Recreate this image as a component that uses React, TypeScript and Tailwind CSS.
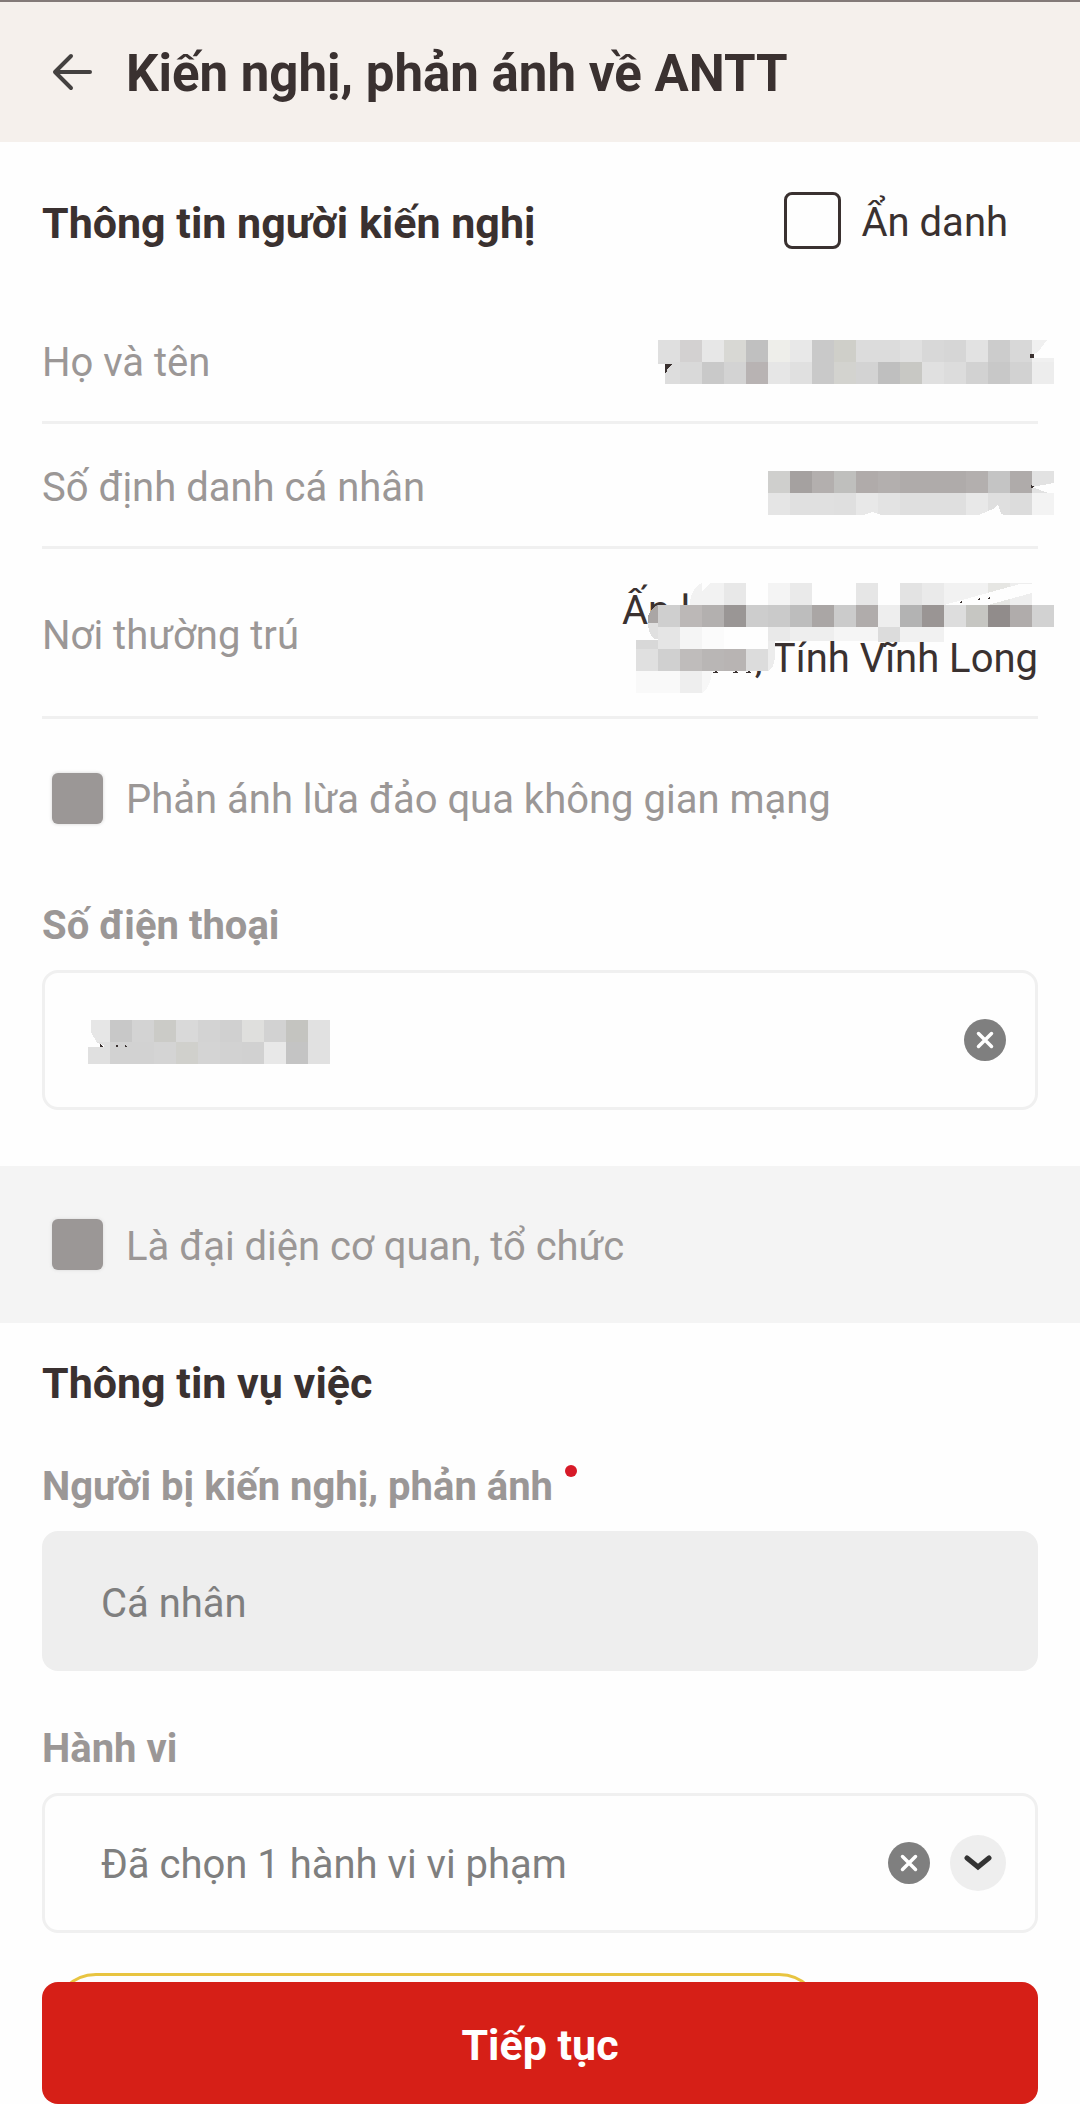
import React from "react";
import clsx from "clsx";

const CELL = 22;

// One string per row, one grey per cell. "-" leaves the cell open.
const nameMask = [
  "dfdfdf d3d1d1 e7e7e7 d8d8d4 c0c0c0 eeeeea e8e8e8 c9c9c9 cfcfc9 dcdcdc dcdcdc e0e0e0 d8d8d8 d6d6d6 e2e2e2 cccccc d8d8d8 f0f0f0",
  "dddddd d9d9d9 c9c9c9 d3d3d3 b8b3b3 e6e6e6 e0e0e0 c9c9c9 d3d3cf d3d3d3 bfbfbf c8c8c4 e0e0e0 dcdcdc d2d2d2 c8c8c8 d2d2d2 ededed",
];

const idMask = [
  "cfcfcd a5a1a0 b3afae bfbfbd b0abaa b3afae afabaa afabaa afabaa b3afae c4c4c4 afabaa e2e2e2",
  "e5e5e5 e0e0e0 e0e0e0 dfdfdf e8e8e8 e3e3e3 dfdfdf dfdfdf dfdfdf e8e8e8 dfdfdf dcdcdc f3f3f3",
];

const addressMask = [
  "- - - f2f2f2 e8e8e8 - f4f4f4 eaeaea - - e6e6e6 - e3e3e3 eaeaea f2f2f2 f2f2f2 e6e6e3 eeeeee -",
  "- cfcfcf bcb8b7 b3b0af 9a9695 cdcdcd cacaca bdbdbd aaa6a5 cbcbcb b0acab eeeeee b3b3b3 9a9594 dddddd c6c6c2 918c8b b0acab d2d2d2",
  "- e5e5e5 f5f5f5 fbfbfb fefefe fefefe - - - - - - - - - - - - -",
  "e0e0e0 d0d0d0 bfbcbb b9b6b5 b8b4b3 dcdcdc - - - - - - - - - - - - -",
  "f9f9f9 f9f9f9 eeeeee - - - - - - - - - - - - - - - -",
];

const phoneMask = [
  "e6e6e6 c8c8c8 d3d3d3 cbcbc7 d9d9d9 d3d3d3 d0d0d0 dfdfdd d2d2d2 c4c4c0 e1e1e1",
  "e0e0e0 d2d2d2 d2d2d2 d4d4d4 d0d0cc d4d4d4 d2d2d2 d1d1d1 e8e8e8 c4c4c4 e1e1e1",
];

type MosaicProps = {
  rows: string[];
  className?: string;
  children?: React.ReactNode;
};

function Mosaic({ rows, className, children }: MosaicProps) {
  const width = rows[0].split(" ").length * CELL;
  const height = rows.length * CELL;

  return (
    <svg
      width={width}
      height={height}
      viewBox={`0 0 ${width} ${height}`}
      shapeRendering="crispEdges"
      className={clsx("shrink-0", className)}
      aria-hidden="true"
    >
      {rows.map((row, y) =>
        row.split(" ").map((color, x) =>
          color === "-" ? null : (
            <rect key={`${x}-${y}`} x={x * CELL} y={y * CELL} width={CELL} height={CELL} fill={`#${color}`} />
          )
        )
      )}
      {children}
    </svg>
  );
}

function InfoRow({ label, tall, children }: { label: string; tall?: boolean; children: React.ReactNode }) {
  return (
    <div
      className={clsx(
        "flex items-center justify-between border-b-3 border-[#f0f0f0]",
        tall ? "h-[170px]" : "h-[125px]"
      )}
    >
      <dt className="pt-[6px] leading-12 text-[#9b9796]">{label}</dt>
      <dd>{children}</dd>
    </div>
  );
}

function DisabledCheck({ label }: { label: string }) {
  return (
    <label className="flex items-center gap-[23px] pl-[10px] text-[#9b9796]">
      <input
        type="checkbox"
        disabled
        className="size-[51px] shrink-0 appearance-none rounded-md bg-[#9b9796] shadow-[0_0_3px_1px_#e4e4e4]"
      />
      <span className="pt-1 leading-12">{label}</span>
    </label>
  );
}

function ClearButton() {
  return (
    <button type="button" aria-label="Xóa" className="shrink-0">
      <svg width="42" height="42" viewBox="0 0 42 42">
        <circle cx="21" cy="21" r="21" fill="#7f7f7f" />
        <path d="M14.5 14.5l13 13M27.5 14.5l-13 13" stroke="#fff" strokeWidth="3.5" strokeLinecap="round" />
      </svg>
    </button>
  );
}

const fieldLabel = "leading-12 font-bold text-[#9b9796]";
const fieldBox = "flex h-[140px] items-center rounded-2xl border-3 border-[#f0f0f0] pr-[29px]";

export default function App() {
  return (
    <div className="w-full bg-[#fefefe] font-[Roboto,'Noto_Sans',sans-serif] text-[40px] text-[#3a3130]">
      <header className="flex h-[142px] items-center gap-8 border-t-2 border-[#837a78] bg-[#f5f0ec] px-[52px]">
        <button type="button" aria-label="Quay lại">
          <svg
            width="42"
            height="38"
            viewBox="0 0 42 38"
            fill="none"
            stroke="#444140"
            strokeWidth="4"
            strokeLinecap="round"
            strokeLinejoin="round"
          >
            <path d="M38 19H4M19 3L3 19l16 16" />
          </svg>
        </button>
        <h1 className="pt-1 text-[51px] leading-14 font-bold">Kiến nghị, phản ánh về ANTT</h1>
      </header>

      <main>
        <section className="px-[42px] pt-[50px]">
          <div className="flex items-center justify-between pr-[30px]">
            <h2 className="pt-1 text-[43px] leading-12 font-bold">Thông tin người kiến nghị</h2>
            <label className="flex items-center gap-5">
              <input
                type="checkbox"
                className="size-[57px] shrink-0 appearance-none rounded-lg border-3 border-[#3a3130]"
              />
              <span className="pt-1 leading-12">Ẩn danh</span>
            </label>
          </div>

          <dl className="mt-[50px]">
            <InfoRow label="Họ và tên">
              <Mosaic rows={nameMask} className="mt-1 -mr-4">
                <path d="M0 24h7v20H0z" fill="#fefefe" />
                <path d="M7 24h7l-4 4-2 5H7z" fill="#3a3130" />
                <path d="M389 0h7v18h-22v-3l6-3z" fill="#fefefe" />
                <path d="M372 14h4v4h-4z" fill="#3a3130" />
              </Mosaic>
            </InfoRow>
            <InfoRow label="Số định danh cá nhân">
              <Mosaic rows={idMask} className="mt-4 -mr-4">
                <path d="M286 8v4l-22 4 16 6h6zM211 44l16-7 3-4 3 10 3 1zM96 44l8-3 10 3z" fill="#fefefe" />
                <path d="M263 14l4 2-4 1z" fill="#3a3130" />
              </Mosaic>
            </InfoRow>
            <InfoRow label="Nơi thường trú" tall>
              <div className="relative mt-1 w-[416px]">
                <p className="leading-12">Ấp l</p>
                <p className="text-right leading-12">, Tính Vĩnh Long</p>
                <Mosaic rows={addressMask} className="absolute -top-1 -right-4">
                  <path d="M22 22v30q-10-6-10-16t10-14z" fill="#aaa6a5" />
                  <path d="M54 22q0-16 12-22v22z" fill="#f2f2f2" />
                  <path d="M66 0h8l-8 8z" fill="#fefefe" />
                  <path d="M12 40h10v16h-4q-6-6-6-16z" fill="#e0e0e0" />
                  <path d="M132 44h22v14h-22z" fill="#e9e9e9" />
                  <path d="M154 44h22v14h-22z" fill="#eeeeee" />
                  <path d="M176 44h22v14h-22z" fill="#eeeeee" />
                  <path d="M198 44h44v14h-44z" fill="#f5f5f5" />
                  <path d="M242 44h22v15h-22z" fill="#dcdcdc" />
                  <path d="M264 44h44v15h-44z" fill="#f1f1f1" />
                  <path d="M0 57h22v9H0z" fill="#d8d8d8" />
                  <path d="M132 58h7v16q-1 12-7 14z" fill="#ececec" />
                  <path d="M66 88h10q-2 18-10 22z" fill="#f7f7f7" />
                  <path d="M308 22l76-21 34-1v4l-66 18z" fill="#fefefe" />
                  <path d="M323 20l3-3v3zM341 17l3-2v2zM351 16l3-2v2zM76 90h6l-2-2zM96 90h6l-2-2zM109 90h6l-2-2z" fill="#3a3130" />
                </Mosaic>
              </div>
            </InfoRow>
          </dl>

          <div className="mt-[53px]">
            <DisabledCheck label="Phản ánh lừa đảo qua không gian mạng" />
          </div>

          <div className="mt-[78px] flex flex-col gap-5">
            <label htmlFor="phone" className={fieldLabel}>Số điện thoại</label>
            <div className={clsx(fieldBox, "pl-[43px]")}>
              <Mosaic rows={phoneMask} className="mt-1">
                <path d="M0 0h3v12l6 11 7 2v2H0z" fill="#fefefe" />
                <path d="M12 24l4 3h-4zM28 25h2v2h-2zM37 24l2 3h-2z" fill="#3a3130" />
              </Mosaic>
              <input id="phone" type="tel" className="min-w-0 flex-1 outline-none" />
              <ClearButton />
            </div>
          </div>
        </section>

        <section className="mt-14 flex h-[157px] items-center bg-[#f4f4f4] px-[42px]">
          <DisabledCheck label="Là đại diện cơ quan, tổ chức" />
        </section>

        <section className="px-[42px] pt-9">
          <h2 className="text-[43px] leading-12 font-bold">Thông tin vụ việc</h2>

          <div className="mt-14 flex flex-col gap-5">
            <label htmlFor="target" className={clsx(fieldLabel, "flex items-start gap-3")}>
              Người bị kiến nghị, phản ánh
              <span className="mt-[2px] size-3 rounded-full bg-[#d71a28]" />
            </label>
            <input
              id="target"
              type="text"
              disabled
              defaultValue="Cá nhân"
              className="h-[140px] w-full rounded-2xl bg-[#eeeeee] px-[59px] pt-1 text-[#7f7f7f]"
            />
          </div>

          <div className="mt-[54px] flex flex-col gap-5">
            <label htmlFor="behaviour" className={fieldLabel}>Hành vi</label>
            <div className={clsx(fieldBox, "gap-5 pl-14")}>
              <input
                id="behaviour"
                type="text"
                readOnly
                defaultValue="Đã chọn 1 hành vi vi phạm"
                className="min-w-0 flex-1 pt-1 text-[#7f7f7f] outline-none"
              />
              <ClearButton />
              <button
                type="button"
                aria-label="Mở danh sách"
                className="flex size-14 shrink-0 items-center justify-center rounded-full bg-[#eeeeee]"
              >
                <svg width="28" height="18" viewBox="0 0 28 18" fill="none">
                  <path d="M3 4l11 9 11-9" stroke="#333" strokeWidth="5" strokeLinecap="round" />
                </svg>
              </button>
            </div>
          </div>
        </section>
      </main>

      <footer className="px-[42px] pt-10">
        <div className="mr-[215px] ml-[10px] h-24 rounded-[44px] border-3 border-[#e8c440]" />
        <button
          type="button"
          className="relative -mt-[87px] block h-[122px] w-full rounded-2xl bg-[#d61f17] pt-1 text-[43px] font-bold text-white"
        >
          Tiếp tục
        </button>
      </footer>
    </div>
  );
}
